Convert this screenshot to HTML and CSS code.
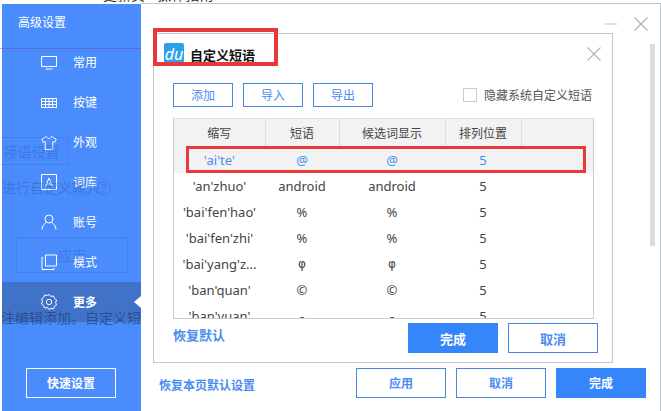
FILE: index.html
```html
<!DOCTYPE html>
<html lang="en">
<head>
    <meta charset="UTF-8">
    <meta name="viewport" content="width=device-width, initial-scale=1.0">
    <title>高级设置</title>
    <link rel="stylesheet" href="styles.css">
</head>
<body>
    <!-- the window underneath, only its last pixels stick out on top -->
    <div class="backdrop">
        <span class="ghost-top ghost-top-a">常用 / 帮助</span>
        <span class="ghost-top ghost-top-b">更新员 / 操作指南</span>
    </div>

    <div class="app">
        <aside class="sidebar">
            <div class="sidebar-title">高级设置</div>
            <nav class="menu">
                <div class="menu-item">
                    <svg viewBox="0 0 16 16" class="menu-icon"><path d="M.5 2.500h15v10H.5zM4.500 15h7"/></svg>
                    <span>常用</span>
                </div>
                <div class="menu-item">
                    <svg viewBox="0 0 16 16" class="menu-icon"><path d="M.5 4.500h15v9H.5zM.5 7.500h15M.5 10.500h15M4.500 4.500v9M8 4.500v9M11.500 4.500v9"/></svg>
                    <span>按键</span>
                </div>
                <div class="menu-item">
                    <svg viewBox="0 0 16 16" class="menu-icon"><path d="M5.500 2.500 .7 5.200l1.600 3.200 1.900-.8v7.900h7.600V7.600l1.900.8 1.600-3.200-4.800-2.700C9.900 5 6.100 5 5.500 2.500z"/></svg>
                    <span>外观</span>
                </div>
                <div class="menu-item">
                    <svg viewBox="0 0 16 16" class="menu-icon"><path d="M.5.5h15v15H.5zM4.500 12.500 8 4l3.500 8.500M5.600 9.800h4.800"/></svg>
                    <span>词库</span>
                </div>
                <div class="menu-item">
                    <svg viewBox="0 0 16 16" class="menu-icon"><circle cx="8" cy="5" r="4"/><path d="M1 15.500c.3-4 3-6.500 4.500-7M15 15.500c-.3-4-3-6.500-4.500-7"/></svg>
                    <span>账号</span>
                </div>
                <div class="menu-item">
                    <svg viewBox="0 0 16 16" class="menu-icon"><path d="M4.500 1h11v11h-11zM2.500 3.500H1v12h12V14"/></svg>
                    <span>模式</span>
                </div>
                <div class="menu-item active">
                    <svg viewBox="0 0 16 16" class="menu-icon"><path d="M8 .6l2 1.800 2.600-.4 1 2.500 2 1.500-1 2.500.9 2.500-2.100 1.400-1 2.500-2.500-.4L8 15.400l-1.900-1.900-2.600.4-1-2.500-2-1.400 1-2.500-1-2.500 2.100-1.500 1-2.500 2.500.4z"/><circle cx="8" cy="8" r="2.700"/></svg>
                    <span>更多</span>
                </div>
            </nav>
            <button class="quick-btn">快速设置</button>
        </aside>

        <main class="panel">
            <div class="window-controls">
                <svg viewBox="0 0 12 2" class="win-min"><path d="M0 1h12"/></svg>
                <svg viewBox="0 0 14 14" class="win-close"><path d="M.5.5l13 13M13.500.5l-13 13"/></svg>
            </div>

            <section class="phrase-dialog">
                <header class="dialog-head">
                    <div class="logo">du</div>
                    <h1 class="dialog-title">自定义短语</h1>
                    <svg viewBox="0 0 14 14" class="dialog-close"><path d="M.5.5l13 13M13.500.5l-13 13"/></svg>
                </header>

                <div class="toolbar">
                    <button class="btn-small">添加</button>
                    <button class="btn-small">导入</button>
                    <button class="btn-small">导出</button>
                    <label class="hide-system"><span class="checkbox"></span>隐藏系统自定义短语</label>
                </div>

                <div class="table-wrap">
                    <table class="phrase-table">
                        <colgroup>
                            <col class="col-abbr"><col class="col-phrase"><col class="col-show"><col class="col-pos"><col>
                        </colgroup>
                        <thead>
                            <tr><th>缩写</th><th>短语</th><th>候选词显示</th><th>排列位置</th><th></th></tr>
                        </thead>
                        <tbody>
                            <tr class="selected"><td>'ai'te'</td><td>@</td><td>@</td><td>5</td><td></td></tr>
                            <tr><td>'an'zhuo'</td><td>android</td><td>android</td><td>5</td><td></td></tr>
                            <tr><td>'bai'fen'hao'</td><td>%</td><td>%</td><td>5</td><td></td></tr>
                            <tr><td>'bai'fen'zhi'</td><td>%</td><td>%</td><td>5</td><td></td></tr>
                            <tr><td>'bai'yang'z...</td><td class="sym">φ</td><td class="sym">φ</td><td>5</td><td></td></tr>
                            <tr><td>'ban'quan'</td><td>©</td><td>©</td><td>5</td><td></td></tr>
                            <tr><td>'ban'yuan'</td><td>-</td><td>-</td><td>5</td><td></td></tr>
                        </tbody>
                    </table>
                </div>

                <footer class="dialog-foot">
                    <a class="link-default">恢复默认</a>
                    <button class="btn btn-primary btn-inner">完成</button>
                    <button class="btn btn-inner">取消</button>
                </footer>
            </section>

            <footer class="panel-foot">
                <a class="link-page">恢复本页默认设置</a>
                <button class="btn">应用</button>
                <button class="btn">取消</button>
                <button class="btn btn-primary">完成</button>
            </footer>

            <div class="scrollbar"></div>
        </main>
    </div>

    <!-- what shows through the sidebar -->
    <div class="show-through">
        <div class="ghost-line"></div>
        <div class="ghost-box ghost-box-a">接语设置</div>
        <span class="ghost ghost-input">进行自定义输入</span>
        <span class="ghost-help">?</span>
        <div class="ghost-box ghost-box-b">应用</div>
        <span class="ghost ghost-note">注编辑添加。自定义短</span>
    </div>

    <!-- red marks drawn over the screenshot -->
    <div class="mark mark-title"></div>
    <div class="mark mark-row"></div>
</body>
</html>
```

FILE: styles.css
```css
* {
    box-sizing: border-box;
}

body {
    position: relative;
    width: 661px;
    height: 411px;
    margin: 0;
    overflow: hidden;
    background: #fff;
    font-family: 'Noto Sans', 'Noto Sans CJK SC', sans-serif;
    font-size: 12px;
    color: #444;
}

/* window underneath */
.backdrop {
    position: absolute;
    inset: 0;
}

.ghost-top {
    position: absolute;
    font-size: 14px;
    line-height: 20px;
    white-space: nowrap;
    color: #333;
}

.ghost-top-a { left: -4px; top: -17px; }
.ghost-top-b { left: 103px; top: -15px; }

.show-through {
    position: absolute;
    left: 0;
    top: 0;
    width: 141px;
    height: 411px;
    overflow: hidden;
    pointer-events: none;
}

.ghost {
    position: absolute;
    font-size: 14px;
    line-height: 20px;
    white-space: nowrap;
    color: rgba(20, 50, 120, 0.25);
}

.ghost-input { left: 2px; top: 178px; }
.ghost-note { left: 1px; top: 308px; color: rgba(20, 45, 100, 0.55); }

.ghost-help {
    position: absolute;
    left: 97px;
    top: 181px;
    width: 14px;
    height: 14px;
    border: 1px solid rgba(20, 50, 120, 0.2);
    border-radius: 50%;
    font-size: 10px;
    line-height: 12px;
    text-align: center;
    color: rgba(20, 50, 120, 0.25);
}

.ghost-line {
    position: absolute;
    left: 0;
    top: 48px;
    width: 141px;
    height: 1px;
    background: rgba(120, 60, 150, 0.4);
}

.ghost-box {
    position: absolute;
    display: flex;
    align-items: center;
    justify-content: center;
    border: 1px solid rgba(20, 60, 160, 0.15);
    color: rgba(20, 60, 160, 0.25);
    font-size: 14px;
}

.ghost-box-a { left: -6px; top: 137px; width: 75px; height: 28px; }
.ghost-box-b { left: 16px; top: 237px; width: 112px; height: 36px; }

.app {
    position: relative;
    display: flex;
    height: 411px;
}

/* sidebar */
.sidebar {
    display: flex;
    flex-direction: column;
    width: 139px;
    margin: 4px 0 0 2px;
    background: #4a8cfb;
    color: #fff;
}

.sidebar-title {
    height: 38px;
    padding: 10px 0 0 16px;
    line-height: 18px;
}

.menu-item {
    display: flex;
    align-items: center;
    height: 40px;
    padding-left: 39px;
    gap: 16px;
    position: relative;
}

.menu-icon {
    width: 16px;
    height: 16px;
    fill: none;
    stroke: #fff;
    stroke-width: 1;
}

.menu-item.active {
    background: #4073c8;
    font-weight: bold;
}

.menu-item.active::after {
    content: '';
    position: absolute;
    right: 0;
    top: 14px;
    border: 6px solid transparent;
    border-right: 7px solid #fff;
    border-left: 0;
}

.quick-btn {
    width: 90px;
    height: 30px;
    margin: auto 0 13px 24px;
    border: 1px solid #fff;
    background: transparent;
    color: #fff;
    font: bold 12px 'Noto Sans', 'Noto Sans CJK SC', sans-serif;
}

/* settings panel */
.panel {
    position: relative;
    width: 520px;
    margin-top: 3px;
    padding: 0 14px 0 12px;
    border-top: 1px solid #c4c8cc;
    border-right: 1px solid #c4c8cc;
    background: #fff;
}

.window-controls {
    display: flex;
    justify-content: flex-end;
    align-items: center;
    gap: 17px;
    height: 29px;
    margin-right: -2px;
    padding-top: 11px;
}

.win-min {
    width: 12px;
    height: 2px;
    stroke: #c0c0c0;
}

.win-close {
    width: 14px;
    height: 14px;
    stroke: #b4b4b4;
    stroke-width: 1.2;
}

.scrollbar {
    position: absolute;
    right: 5px;
    top: 40px;
    width: 5px;
    height: 202px;
    background: #dcdcdc;
}

/* custom phrase dialog */
.phrase-dialog {
    width: 460px;
    height: 330px;
    border: 1px solid #c4c8cc;
}

.dialog-head {
    display: flex;
    align-items: flex-start;
    height: 49px;
    padding: 9px 11px 0 10px;
}

.logo {
    width: 20px;
    height: 20px;
    border-radius: 2px;
    background: linear-gradient(135deg, #2f9bec, #29a8e6);
    color: #fff;
    font-size: 16px;
    font-style: italic;
    line-height: 22px;
    text-align: center;
}

.dialog-title {
    margin: 2px 0 0 6px;
    font-size: 13px;
    line-height: 20px;
    font-weight: bold;
    color: #111;
}

.dialog-close {
    width: 14px;
    height: 14px;
    margin: 4px 0 0 auto;
    stroke: #b4b4b4;
    stroke-width: 1.2;
}

.toolbar {
    display: flex;
    align-items: center;
    gap: 10px;
    height: 24px;
    margin: 0 19px 11px;
}

.btn-small {
    width: 60px;
    height: 24px;
    padding: 0;
    border: 1px solid #4a86e0;
    background: #fff;
    color: #4a8cf0;
    font: 12px 'Noto Sans', 'Noto Sans CJK SC', sans-serif;
}

.hide-system {
    display: flex;
    align-items: center;
    gap: 7px;
    margin-left: auto;
    margin-right: 1px;
    color: #555;
}

.checkbox {
    width: 14px;
    height: 14px;
    border: 1px solid #ccc;
}

.table-wrap {
    width: 421px;
    height: 201px;
    margin-left: 19px;
    overflow: hidden;
    border: 1px solid #ccc;
    border-top-color: #ddd;
}

.phrase-table {
    width: 419px;
    table-layout: fixed;
    border-collapse: collapse;
}

.col-abbr { width: 91px; }
.col-phrase { width: 74px; }
.col-show { width: 106px; }
.col-pos { width: 76px; }

.phrase-table th {
    height: 28px;
    padding: 0;
    border-right: 1px solid #ddd;
    background: #f2f2f2;
    font-weight: normal;
    color: #444;
}

.phrase-table th:last-child {
    border-right: 0;
}

.phrase-table td {
    height: 26px;
    padding: 0;
    font-size: 13px;
    text-align: center;
    white-space: nowrap;
}

.phrase-table td.sym {
    font-family: 'DejaVu Sans', sans-serif;
    font-size: 12px;
}

.phrase-table .selected td {
    background: #f2f2f2;
    color: #4a8cf0;
}

.dialog-foot {
    display: flex;
    gap: 10px;
    padding: 4px 14px 0 19px;
}

.link-default {
    margin: 3px auto 0 0;
    font-weight: bold;
    color: #4a8cf0;
    font-size: 13px;
    line-height: 18px;
}

.btn {
    width: 90px;
    height: 30px;
    padding: 0;
    border: 1px solid #4a86e0;
    background: #fff;
    color: #4a8cf0;
    font: bold 12px 'Noto Sans', 'Noto Sans CJK SC', sans-serif;
}

.btn-inner {
    font-size: 13px;
}

.btn-primary {
    border-color: #3585fb;
    background: #3585fb;
    color: #fff;
}

.panel-foot {
    display: flex;
    align-items: center;
    gap: 10px;
    margin-top: 5px;
    padding-left: 6px;
}

.link-page {
    margin-right: auto;
    font-weight: bold;
    color: #4a8cf0;
    position: relative;
    top: 2px;
}

/* red marks */
.mark {
    position: absolute;
    border: 4px solid #e8383c;
}

.mark-title { left: 153px; top: 28px; width: 125px; height: 38px; }
.mark-row { left: 186px; top: 146px; width: 400px; height: 27px; border-width: 3px; }
```
